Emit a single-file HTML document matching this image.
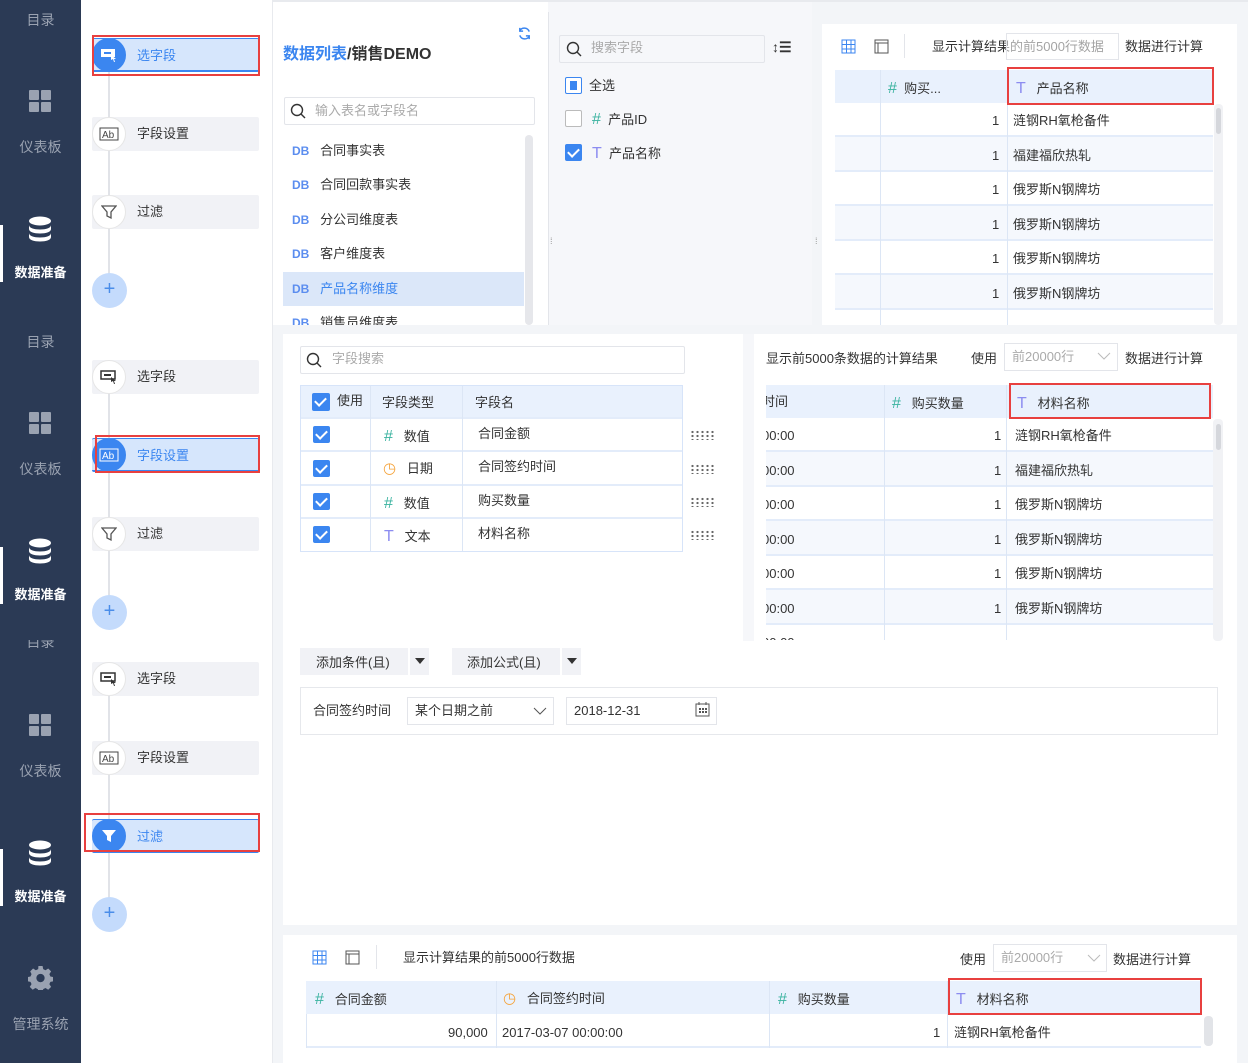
<!DOCTYPE html><html><head><meta charset="utf-8"><style>
*{box-sizing:border-box;margin:0;padding:0}
body{width:1248px;height:1063px;overflow:hidden;background:#f3f5f8;font-family:"Liberation Sans","Noto Sans CJK SC",sans-serif;font-size:13px;line-height:1.2;color:#333;position:relative}
.a{position:absolute}
.clip{position:absolute;overflow:hidden}
.sbt{position:absolute;left:0;width:81px;text-align:center;color:#9aa2b1;font-size:14px}
.sbw{color:#fff;font-weight:bold;font-size:13px}
.dash{position:absolute;left:29px;width:22px;height:22px}
.dash i{position:absolute;width:10px;height:10px;background:#9aa2b1;border-radius:1px}
.step{position:absolute;left:92px;width:167px;height:34px;background:#f1f2f6;border-radius:2px}
.step span{position:absolute;left:45px;top:9px;font-size:13px;color:#333}
.circ{position:absolute;left:92px;width:34px;height:34px;border-radius:50%;background:#fff;border:1px solid #e6e6e6;display:flex;align-items:center;justify-content:center}
.act{background:#d6e6fc;border-bottom:2px solid #3b86f0;border-top:1px solid #3b86f0}
.act span{color:#3b86f0}
.ca{background:#3b86f0;border-color:#3b86f0}
.plus{position:absolute;left:92px;width:35px;height:35px;border-radius:50%;background:#c4dbfc;color:#4a8de9;text-align:center;line-height:33px;font-size:20px}
.red{position:absolute;border:2px solid #e8403f}
.vline{position:absolute;left:108px;width:2px;background:#e1e3e8}
.tx{position:absolute;white-space:nowrap}
.cb{position:absolute;width:17px;height:17px;border-radius:2px;background:#3b86f0}
.cb:after{content:"";position:absolute;left:5px;top:2px;width:5px;height:9px;border:solid #fff;border-width:0 2px 2px 0;transform:rotate(45deg)}
.hash{color:#3bb3a0;font-size:16px}
.tt{color:#8c8cf0;font-size:16px}
.row{position:absolute;border-bottom:2px solid #e3ecfa}
.hd{position:absolute;background:#e9f1fd}
.vl{position:absolute;width:1px;background:#dce6f5}
.db{color:#5b8def;font-size:12px;font-weight:bold}
.grip{position:absolute;width:26px;height:10px;background-image:radial-gradient(circle,#666 1px,transparent 1.3px);background-size:5px 4px}
</style></head><body>

<div class="a" style="left:0;top:0;width:81px;height:1063px;background:#2b3a55"></div>
<div class="clip" style="left:0;top:0;width:81px;height:322px">
 <div class="sbt" style="top:12px">目录</div>
 <div class="dash" style="top:90px"><i style="left:0;top:0"></i><i style="left:12px;top:0"></i><i style="left:0;top:12px"></i><i style="left:12px;top:12px"></i></div>
 <div class="sbt" style="top:139px">仪表板</div>
 <svg class="a" style="left:28px;top:216px" width="24" height="26" viewBox="0 0 24 26"><ellipse cx="12" cy="5" rx="11" ry="4.5" fill="#fff"/><path d="M1 9c0 3 5 4.5 11 4.5S23 12 23 9v4c0 3-5 4.5-11 4.5S1 16 1 13z" fill="#fff"/><path d="M1 17c0 3 5 4.5 11 4.5S23 20 23 17v4c0 3-5 4.5-11 4.5S1 24 1 21z" fill="#fff"/></svg>
 <div class="a" style="left:0;top:225px;width:3px;height:57px;background:#fff"></div>
 <div class="sbt sbw" style="top:265px">数据准备</div>
</div>
<div class="clip" style="left:0;top:322px;width:81px;height:318px">
 <div class="sbt" style="top:12px">目录</div>
 <div class="dash" style="top:90px"><i style="left:0;top:0"></i><i style="left:12px;top:0"></i><i style="left:0;top:12px"></i><i style="left:12px;top:12px"></i></div>
 <div class="sbt" style="top:139px">仪表板</div>
 <svg class="a" style="left:28px;top:216px" width="24" height="26" viewBox="0 0 24 26"><ellipse cx="12" cy="5" rx="11" ry="4.5" fill="#fff"/><path d="M1 9c0 3 5 4.5 11 4.5S23 12 23 9v4c0 3-5 4.5-11 4.5S1 16 1 13z" fill="#fff"/><path d="M1 17c0 3 5 4.5 11 4.5S23 20 23 17v4c0 3-5 4.5-11 4.5S1 24 1 21z" fill="#fff"/></svg>
 <div class="a" style="left:0;top:225px;width:3px;height:57px;background:#fff"></div>
 <div class="sbt sbw" style="top:265px">数据准备</div>
</div>
<div class="clip" style="left:0;top:640px;width:81px;height:423px">
 <div class="sbt" style="top:-6px">目录</div>
 <div class="dash" style="top:74px"><i style="left:0;top:0"></i><i style="left:12px;top:0"></i><i style="left:0;top:12px"></i><i style="left:12px;top:12px"></i></div>
 <div class="sbt" style="top:123px">仪表板</div>
 <svg class="a" style="left:28px;top:200px" width="24" height="26" viewBox="0 0 24 26"><ellipse cx="12" cy="5" rx="11" ry="4.5" fill="#fff"/><path d="M1 9c0 3 5 4.5 11 4.5S23 12 23 9v4c0 3-5 4.5-11 4.5S1 16 1 13z" fill="#fff"/><path d="M1 17c0 3 5 4.5 11 4.5S23 20 23 17v4c0 3-5 4.5-11 4.5S1 24 1 21z" fill="#fff"/></svg>
 <div class="a" style="left:0;top:209px;width:3px;height:57px;background:#fff"></div>
 <div class="sbt sbw" style="top:249px">数据准备</div>
 <svg class="a" style="left:28px;top:325px" width="25" height="25" viewBox="0 0 24 24"><path fill="#9aa2b1" d="M10 1h4l.6 3 2.2 1 2.6-1.7 2.8 2.8L20.5 8.7l1 2.3 3 .6v4l-3 .6-1 2.2 1.7 2.6-2.8 2.8-2.6-1.7-2.2 1-.6 3h-4l-.6-3-2.3-1-2.6 1.7-2.8-2.8 1.7-2.6-1-2.2-3-.6v-4l3-.6 1-2.3L2.1 6.1 4.9 3.3 7.5 5l2.3-1z"/><circle cx="12" cy="12.5" r="4" fill="#2b3a55"/></svg>
 <div class="sbt" style="top:376px">管理系统</div>
</div>

<div class="a" style="left:81px;top:0;width:192px;height:1063px;background:#fff;border-right:1px solid #e8eaee"></div>
<div class="vline" style="top:55px;height:235px"></div>
<div class="step act" style="top:38px"><span>选字段</span></div>
<div class="circ ca" style="top:38px"><svg width="18" height="16"><rect x="1" y="2" width="14" height="8" fill="#fff"/><rect x="4" y="5" width="7" height="2" fill="#3b86f0"/><path d="M11 8l5 4-2 0 1 3-1 0-1-3-2 1z" fill="#fff"/></svg></div>
<div class="red" style="left:92px;top:35px;width:168px;height:41px"></div>
<div class="step" style="top:117px"><span>字段设置</span></div>
<div class="circ" style="top:117px"><svg width="20" height="14"><rect x="1" y="1" width="18" height="12" fill="none" stroke="#444"/><text x="3" y="11" font-size="10" fill="#444" font-family="Liberation Sans">Ab</text></svg></div>
<div class="step" style="top:195px"><span>过滤</span></div>
<div class="circ" style="top:195px"><svg width="16" height="16"><path d="M1 2h14l-5 6v6l-4-2V8z" fill="none" stroke="#555" stroke-width="1.3"/></svg></div>
<div class="plus" style="top:273px">+</div>
<div class="vline" style="top:377px;height:235px"></div>
<div class="step" style="top:360px"><span>选字段</span></div>
<div class="circ" style="top:360px"><svg width="18" height="16"><rect x="1" y="2" width="14" height="8" fill="none" stroke="#333" stroke-width="1.5"/><rect x="4" y="5" width="7" height="2" fill="#333"/><path d="M11 8l5 4-2 0 1 3-1 0-1-3-2 1z" fill="#333"/></svg></div>
<div class="step act" style="top:438px"><span>字段设置</span></div>
<div class="circ ca" style="top:438px"><svg width="20" height="14"><rect x="1" y="1" width="18" height="12" fill="none" stroke="#fff"/><text x="3" y="11" font-size="10" fill="#fff" font-family="Liberation Sans">Ab</text></svg></div>
<div class="red" style="left:95px;top:435px;width:165px;height:38px"></div>
<div class="step" style="top:517px"><span>过滤</span></div>
<div class="circ" style="top:517px"><svg width="16" height="16"><path d="M1 2h14l-5 6v6l-4-2V8z" fill="none" stroke="#555" stroke-width="1.3"/></svg></div>
<div class="plus" style="top:595px">+</div>
<div class="vline" style="top:679px;height:235px"></div>
<div class="step" style="top:662px"><span>选字段</span></div>
<div class="circ" style="top:662px"><svg width="18" height="16"><rect x="1" y="2" width="14" height="8" fill="none" stroke="#333" stroke-width="1.5"/><rect x="4" y="5" width="7" height="2" fill="#333"/><path d="M11 8l5 4-2 0 1 3-1 0-1-3-2 1z" fill="#333"/></svg></div>
<div class="step" style="top:741px"><span>字段设置</span></div>
<div class="circ" style="top:741px"><svg width="20" height="14"><rect x="1" y="1" width="18" height="12" fill="none" stroke="#444"/><text x="3" y="11" font-size="10" fill="#444" font-family="Liberation Sans">Ab</text></svg></div>
<div class="step act" style="top:819px"><span>过滤</span></div>
<div class="circ ca" style="top:819px"><svg width="16" height="16"><path d="M1 2h14l-5 6v6l-4-2V8z" fill="#fff"/></svg></div>
<div class="red" style="left:84px;top:813px;width:176px;height:39px"></div>
<div class="plus" style="top:897px">+</div>

<div class="a" style="left:273px;top:2px;width:275px;height:323px;background:#fff"></div>
<div class="a" style="left:273px;top:0;width:975px;height:2px;background:#e8eaee"></div>
<div class="tx" style="left:283px;top:45px;font-size:16px;font-weight:bold;color:#3b86f0">数据列表<span style="color:#333">/销售DEMO</span></div>
<svg class="a" style="left:517px;top:26px" width="15" height="15" viewBox="0 0 16 16"><path d="M13 6a5.5 5.5 0 0 0-10-1M3 10a5.5 5.5 0 0 0 10 1" fill="none" stroke="#3b86f0" stroke-width="1.6"/><path d="M3 2v3.5h3.5M13 14v-3.5H9.5" fill="none" stroke="#3b86f0" stroke-width="1.6"/></svg>
<div class="a" style="left:284px;top:97px;width:251px;height:28px;border:1px solid #e3e5ea;border-radius:2px"></div>
<svg class="a" style="left:290px;top:103px" width="16" height="16"><circle cx="7" cy="7" r="5.5" fill="none" stroke="#333" stroke-width="1.4"/><path d="M11 11l4 4" stroke="#333" stroke-width="1.4"/></svg>
<div class="tx" style="left:315px;top:103px;color:#aaa">输入表名或字段名</div>
<div class="a" style="left:283px;top:272px;width:241px;height:34px;background:#dbe7f9"></div>
<div class="tx" style="left:292px;top:143px"><span class="db">DB</span>&nbsp;&nbsp;&nbsp;合同事实表</div>
<div class="tx" style="left:292px;top:177px"><span class="db">DB</span>&nbsp;&nbsp;&nbsp;合同回款事实表</div>
<div class="tx" style="left:292px;top:212px"><span class="db">DB</span>&nbsp;&nbsp;&nbsp;分公司维度表</div>
<div class="tx" style="left:292px;top:246px"><span class="db">DB</span>&nbsp;&nbsp;&nbsp;客户维度表</div>
<div class="tx" style="left:292px;top:281px;color:#3b86f0"><span class="db">DB</span>&nbsp;&nbsp;&nbsp;产品名称维度</div>
<div class="clip" style="left:283px;top:306px;width:241px;height:19px"><div class="tx" style="left:9px;top:9px"><span class="db">DB</span>&nbsp;&nbsp;&nbsp;销售员维度表</div></div>
<div class="a" style="left:525px;top:135px;width:8px;height:190px;background:#e6e7eb;border-radius:4px"></div>
<div class="a" style="left:548px;top:2px;width:264px;height:323px;background:#f6f7fa"></div>
<div class="a" style="left:548px;top:12px;width:1px;height:313px;background:#e3e5ea"></div>
<div class="a" style="left:559px;top:35px;width:206px;height:28px;border:1px solid #e3e5ea;background:#f6f7fa;border-radius:2px"></div>
<svg class="a" style="left:566px;top:41px" width="16" height="16"><circle cx="7" cy="7" r="5.5" fill="none" stroke="#333" stroke-width="1.4"/><path d="M11 11l4 4" stroke="#333" stroke-width="1.4"/></svg>
<div class="tx" style="left:591px;top:40px;color:#aaa">搜索字段</div>
<div class="tx" style="left:772px;top:39px;font-size:14px;font-weight:bold">↕☰</div>
<div class="a" style="left:565px;top:77px;width:17px;height:17px;border:1px solid #3b86f0;border-radius:2px;background:#fff"><div style="margin:3px 4px;width:7px;height:9px;background:#3b86f0"></div></div>
<div class="tx" style="left:589px;top:78px">全选</div>
<div class="a" style="left:565px;top:110px;width:17px;height:17px;border:1px solid #bbb;border-radius:2px;background:#fff"></div>
<div class="tx" style="left:592px;top:110px"><span class="hash">#</span>&nbsp;&nbsp;产品ID</div>
<div class="cb" style="left:565px;top:144px"></div>
<div class="tx" style="left:592px;top:144px"><span class="tt">T</span>&nbsp;&nbsp;产品名称</div>
<div class="tx" style="left:550px;top:236px;color:#999;font-size:9px">⁞</div>
<div class="tx" style="left:815px;top:236px;color:#999;font-size:9px">⁞</div>
<div class="a" style="left:822px;top:24px;width:415px;height:301px;background:#fff"></div>
<svg class="a" style="left:841px;top:39px" width="15" height="15"><path d="M1 1h13v13H1zM1 5.5h13M1 10h13M5.5 1v13M10 1v13" fill="none" stroke="#3b86f0"/></svg>
<svg class="a" style="left:874px;top:39px" width="15" height="15"><path d="M1 1h13v13H1zM1 4h13M4 4v10" fill="none" stroke="#555"/></svg>
<div class="a" style="left:904px;top:34px;width:1px;height:24px;background:#e3e5ea"></div>
<div class="tx" style="left:932px;top:39px">显示计算结果的前5000行数据</div>
<div class="a" style="left:1006px;top:33px;width:113px;height:27px;border:1px solid #e3e5ea;background:rgba(255,255,255,.55)"></div>
<div class="tx" style="left:1125px;top:39px">数据进行计算</div>
<div class="hd" style="left:835px;top:70px;width:378px;height:33px"></div>
<div class="tx" style="left:888px;top:79px"><span class="hash">#</span>&nbsp;&nbsp;购买...</div>
<div class="tx" style="left:1016px;top:79px"><span class="tt">T</span>&nbsp;&nbsp;&nbsp;产品名称</div>
<div class="a" style="left:835px;top:137px;width:378px;height:35px;background:#f5f8fd"></div>
<div class="a" style="left:835px;top:206px;width:378px;height:35px;background:#f5f8fd"></div>
<div class="a" style="left:835px;top:275px;width:378px;height:35px;background:#f5f8fd"></div>
<div class="row" style="left:835px;top:135px;width:378px"></div><div class="row" style="left:835px;top:170px;width:378px"></div><div class="row" style="left:835px;top:204px;width:378px"></div><div class="row" style="left:835px;top:239px;width:378px"></div><div class="row" style="left:835px;top:273px;width:378px"></div><div class="row" style="left:835px;top:308px;width:378px"></div>
<div class="vl" style="left:880px;top:70px;height:255px"></div><div class="vl" style="left:1007px;top:70px;height:255px"></div>
<div class="tx" style="left:992px;top:113px">1</div><div class="tx" style="left:1013px;top:113px">涟钢RH氧枪备件</div>
<div class="tx" style="left:992px;top:148px">1</div><div class="tx" style="left:1013px;top:148px">福建福欣热轧</div>
<div class="tx" style="left:992px;top:182px">1</div><div class="tx" style="left:1013px;top:182px">俄罗斯N钢牌坊</div>
<div class="tx" style="left:992px;top:217px">1</div><div class="tx" style="left:1013px;top:217px">俄罗斯N钢牌坊</div>
<div class="tx" style="left:992px;top:251px">1</div><div class="tx" style="left:1013px;top:251px">俄罗斯N钢牌坊</div>
<div class="tx" style="left:992px;top:286px">1</div><div class="tx" style="left:1013px;top:286px">俄罗斯N钢牌坊</div>
<div class="a" style="left:1214px;top:104px;width:9px;height:221px;background:#f1f2f5;border-radius:4px"></div>
<div class="a" style="left:1216px;top:108px;width:5px;height:26px;background:#d5d7dc;border-radius:3px"></div>
<div class="red" style="left:1007px;top:67px;width:207px;height:38px"></div>
<div class="a" style="left:1237px;top:2px;width:11px;height:323px;background:#f3f5f8"></div>

<div class="a" style="left:283px;top:334px;width:460px;height:307px;background:#fff"></div>
<div class="a" style="left:300px;top:346px;width:385px;height:28px;border:1px solid #e3e5ea;border-radius:2px"></div>
<svg class="a" style="left:306px;top:352px" width="16" height="16"><circle cx="7" cy="7" r="5.5" fill="none" stroke="#333" stroke-width="1.4"/><path d="M11 11l4 4" stroke="#333" stroke-width="1.4"/></svg>
<div class="tx" style="left:332px;top:351px;color:#aaa">字段搜索</div>
<div class="a" style="left:300px;top:385px;width:383px;height:167px;border:1px solid #d7e4f9"></div>
<div class="hd" style="left:301px;top:386px;width:381px;height:32px"></div>
<div class="row" style="left:301px;top:417px;width:381px"></div><div class="row" style="left:301px;top:450px;width:381px"></div><div class="row" style="left:301px;top:484px;width:381px"></div><div class="row" style="left:301px;top:517px;width:381px"></div>
<div class="vl" style="left:370px;top:386px;height:165px"></div><div class="vl" style="left:462px;top:386px;height:165px"></div>
<div class="cb" style="left:312px;top:393px;width:18px;height:18px"></div>
<div class="tx" style="left:337px;top:393px">使用</div><div class="tx" style="left:382px;top:395px">字段类型</div><div class="tx" style="left:475px;top:395px">字段名</div>
<div class="cb" style="left:313px;top:426px"></div><div class="cb" style="left:313px;top:460px"></div><div class="cb" style="left:313px;top:493px"></div><div class="cb" style="left:313px;top:526px"></div>
<div class="tx" style="left:384px;top:427px"><span class="hash">#</span>&nbsp;&nbsp;&nbsp;数值</div>
<div class="tx" style="left:383px;top:460px"><span style="color:#f5a33a;font-size:15px">◷</span>&nbsp;&nbsp;&nbsp;日期</div>
<div class="tx" style="left:384px;top:494px"><span class="hash">#</span>&nbsp;&nbsp;&nbsp;数值</div>
<div class="tx" style="left:384px;top:527px"><span class="tt">T</span>&nbsp;&nbsp;&nbsp;文本</div>
<div class="tx" style="left:478px;top:426px">合同金额</div><div class="tx" style="left:478px;top:459px">合同签约时间</div><div class="tx" style="left:478px;top:493px">购买数量</div><div class="tx" style="left:478px;top:526px">材料名称</div>
<div class="grip" style="left:690px;top:430px"></div><div class="grip" style="left:690px;top:464px"></div><div class="grip" style="left:690px;top:497px"></div><div class="grip" style="left:690px;top:530px"></div>
<div class="a" style="left:754px;top:334px;width:483px;height:307px;background:#fff"></div>
<div class="tx" style="left:766px;top:351px">显示前5000条数据的计算结果</div>
<div class="tx" style="left:971px;top:351px">使用</div>
<div class="a" style="left:1004px;top:343px;width:114px;height:28px;border:1px solid #e3e5ea"></div>
<div class="tx" style="left:1012px;top:349px;color:#aaa">前20000行</div>
<svg class="a" style="left:1097px;top:352px" width="14" height="8"><path d="M1 1l6 6 6-6" fill="none" stroke="#bbb"/></svg>
<div class="tx" style="left:1125px;top:351px">数据进行计算</div>
<div class="hd" style="left:766px;top:385px;width:447px;height:33px"></div>
<div class="a" style="left:766px;top:452px;width:447px;height:35px;background:#f5f8fd"></div>
<div class="a" style="left:766px;top:521px;width:447px;height:35px;background:#f5f8fd"></div>
<div class="a" style="left:766px;top:590px;width:447px;height:35px;background:#f5f8fd"></div>
<div class="row" style="left:766px;top:450px;width:447px"></div><div class="row" style="left:766px;top:485px;width:447px"></div><div class="row" style="left:766px;top:519px;width:447px"></div><div class="row" style="left:766px;top:554px;width:447px"></div><div class="row" style="left:766px;top:588px;width:447px"></div><div class="row" style="left:766px;top:623px;width:447px"></div>
<div class="vl" style="left:884px;top:385px;height:255px"></div><div class="vl" style="left:1006px;top:385px;height:255px"></div>
<div class="clip" style="left:766px;top:385px;width:118px;height:255px">
<div class="tx" style="left:-4px;top:9px">时间</div>
<div class="tx" style="left:-4px;top:43px">00:00</div><div class="tx" style="left:-4px;top:78px">00:00</div><div class="tx" style="left:-4px;top:112px">00:00</div><div class="tx" style="left:-4px;top:147px">00:00</div><div class="tx" style="left:-4px;top:181px">00:00</div><div class="tx" style="left:-4px;top:216px">00:00</div><div class="tx" style="left:-4px;top:250px">00:00</div>
</div>
<div class="tx" style="left:892px;top:394px"><span class="hash">#</span>&nbsp;&nbsp;&nbsp;购买数量</div>
<div class="tx" style="left:1017px;top:394px"><span class="tt">T</span>&nbsp;&nbsp;&nbsp;材料名称</div>
<div class="tx" style="left:994px;top:428px">1</div><div class="tx" style="left:1015px;top:428px">涟钢RH氧枪备件</div>
<div class="tx" style="left:994px;top:463px">1</div><div class="tx" style="left:1015px;top:463px">福建福欣热轧</div>
<div class="tx" style="left:994px;top:497px">1</div><div class="tx" style="left:1015px;top:497px">俄罗斯N钢牌坊</div>
<div class="tx" style="left:994px;top:532px">1</div><div class="tx" style="left:1015px;top:532px">俄罗斯N钢牌坊</div>
<div class="tx" style="left:994px;top:566px">1</div><div class="tx" style="left:1015px;top:566px">俄罗斯N钢牌坊</div>
<div class="tx" style="left:994px;top:601px">1</div><div class="tx" style="left:1015px;top:601px">俄罗斯N钢牌坊</div>
<div class="a" style="left:1213px;top:419px;width:10px;height:222px;background:#f1f2f5;border-radius:4px"></div>
<div class="a" style="left:1216px;top:424px;width:5px;height:26px;background:#d5d7dc;border-radius:3px"></div>
<div class="red" style="left:1009px;top:383px;width:202px;height:36px"></div>

<div class="a" style="left:283px;top:641px;width:954px;height:284px;background:#fff"></div>
<div class="a" style="left:743px;top:334px;width:11px;height:307px;background:#f6f7fa"></div>
<div class="a" style="left:300px;top:648px;width:108px;height:27px;background:#f1f2f6"></div>
<div class="tx" style="left:316px;top:655px">添加条件(且)</div>
<div class="a" style="left:410px;top:648px;width:19px;height:27px;background:#f1f2f6"></div>
<svg class="a" style="left:415px;top:658px" width="10" height="6"><path d="M0 0h10L5 6z" fill="#333"/></svg>
<div class="a" style="left:452px;top:648px;width:108px;height:27px;background:#f1f2f6"></div>
<div class="tx" style="left:467px;top:655px">添加公式(且)</div>
<div class="a" style="left:562px;top:648px;width:19px;height:27px;background:#f1f2f6"></div>
<svg class="a" style="left:567px;top:658px" width="10" height="6"><path d="M0 0h10L5 6z" fill="#333"/></svg>
<div class="a" style="left:300px;top:687px;width:918px;height:48px;border:1px solid #e6e8ec"></div>
<div class="tx" style="left:313px;top:703px">合同签约时间</div>
<div class="a" style="left:407px;top:697px;width:147px;height:28px;border:1px solid #e3e5ea"></div>
<div class="tx" style="left:415px;top:703px">某个日期之前</div>
<svg class="a" style="left:533px;top:707px" width="14" height="8"><path d="M1 1l6 6 6-6" fill="none" stroke="#555"/></svg>
<div class="a" style="left:566px;top:697px;width:151px;height:28px;border:1px solid #e3e5ea"></div>
<div class="tx" style="left:574px;top:703px">2018-12-31</div>
<svg class="a" style="left:695px;top:702px" width="15" height="15"><rect x="1" y="2" width="13" height="12" fill="none" stroke="#555"/><path d="M4 0v3M11 0v3" stroke="#555"/><path d="M4 6h2v2H4zM7 6h2v2H7zM10 6h2v2h-2zM4 9h2v2H4zM7 9h2v2H7zM10 9h2v2h-2z" fill="#555"/></svg>

<div class="a" style="left:283px;top:935px;width:954px;height:128px;background:#fff"></div>
<svg class="a" style="left:312px;top:950px" width="15" height="15"><path d="M1 1h13v13H1zM1 5.5h13M1 10h13M5.5 1v13M10 1v13" fill="none" stroke="#3b86f0"/></svg>
<svg class="a" style="left:345px;top:950px" width="15" height="15"><path d="M1 1h13v13H1zM1 4h13M4 4v10" fill="none" stroke="#555"/></svg>
<div class="a" style="left:376px;top:945px;width:1px;height:24px;background:#e3e5ea"></div>
<div class="tx" style="left:403px;top:950px">显示计算结果的前5000行数据</div>
<div class="tx" style="left:960px;top:952px">使用</div>
<div class="a" style="left:993px;top:944px;width:114px;height:28px;border:1px solid #e3e5ea"></div>
<div class="tx" style="left:1001px;top:950px;color:#aaa">前20000行</div>
<svg class="a" style="left:1087px;top:954px" width="14" height="8"><path d="M1 1l6 6 6-6" fill="none" stroke="#bbb"/></svg>
<div class="tx" style="left:1113px;top:952px">数据进行计算</div>
<div class="hd" style="left:306px;top:981px;width:895px;height:33px"></div>
<div class="row" style="left:306px;top:1046px;width:895px"></div>
<div class="vl" style="left:496px;top:981px;height:67px"></div><div class="vl" style="left:769px;top:981px;height:67px"></div><div class="vl" style="left:947px;top:981px;height:67px"></div>
<div class="a" style="left:306px;top:1014px;width:1px;height:34px;background:#dce6f5"></div>
<div class="tx" style="left:315px;top:990px"><span class="hash">#</span>&nbsp;&nbsp;&nbsp;合同金额</div>
<div class="tx" style="left:503px;top:990px"><span style="color:#f5a33a;font-size:15px">◷</span>&nbsp;&nbsp;&nbsp;合同签约时间</div>
<div class="tx" style="left:778px;top:990px"><span class="hash">#</span>&nbsp;&nbsp;&nbsp;购买数量</div>
<div class="tx" style="left:956px;top:990px"><span class="tt">T</span>&nbsp;&nbsp;&nbsp;材料名称</div>
<div class="tx" style="left:448px;top:1025px">90,000</div>
<div class="tx" style="left:502px;top:1025px">2017-03-07 00:00:00</div>
<div class="tx" style="left:933px;top:1025px">1</div>
<div class="tx" style="left:954px;top:1025px">涟钢RH氧枪备件</div>
<div class="a" style="left:1204px;top:1016px;width:9px;height:30px;background:#e2e4e8;border-radius:4px"></div>
<div class="red" style="left:948px;top:978px;width:254px;height:37px"></div>
</body></html>
